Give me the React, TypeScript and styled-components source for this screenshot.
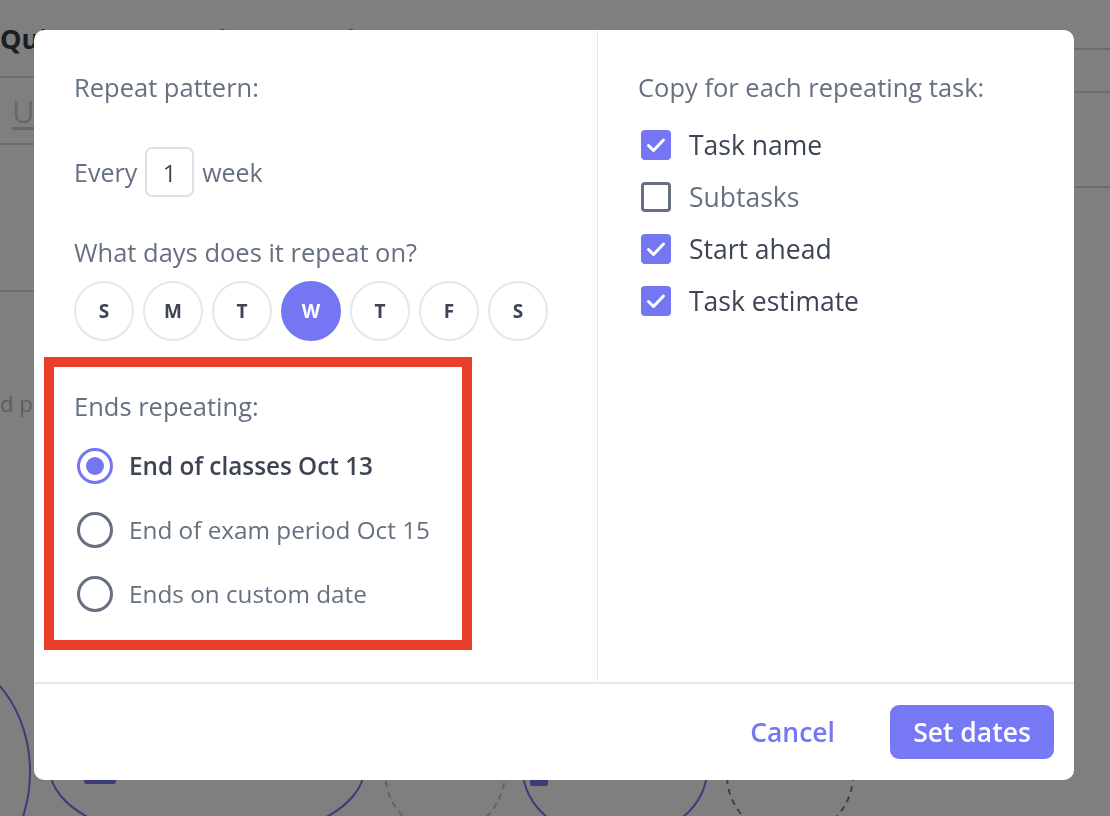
import React from "react";
import styled, { createGlobalStyle, css } from "styled-components";

const FONT = `"Open Sans", "Noto Sans", sans-serif`;

const GlobalStyle = createGlobalStyle`
  html, body { margin: 0; padding: 0; }
  body { font-family: ${FONT}; background: #fff; }
  * { box-sizing: border-box; }
`;

/* ---------- underlying page ---------- */
const Backdrop = styled.div`
  width: 1110px;
  height: 816px;
  display: flex;
  flex-direction: column;
  overflow: hidden;
  background: #fff;
`;

const BgTop = styled.div`
  display: flex;
  flex: 1;
`;

const BgLeft = styled.div`
  width: 600px;
  display: flex;
  flex-direction: column;
`;

const BgRight = styled.div`
  flex: 1;
  display: flex;
  flex-direction: column;
`;

const BgBlock = styled.div<{ $h: number; $line?: boolean }>`
  height: ${(p) => p.$h}px;
  flex-shrink: 0;
  border-bottom: ${(p) => (p.$line ? "2px solid #d9d9d9" : "none")};
  display: flex;
  align-items: center;
  gap: 140px;
  white-space: nowrap;
`;

const BgTitle = styled.span<{ $accent?: boolean }>`
  font-size: 27px;
  font-weight: 700;
  color: ${(p) => (p.$accent ? "#7476f2" : "#363c4a")};
`;

const BgName = styled.span`
  font-size: 31px;
  color: #cfcfcf;
  padding-left: 12px;
  text-decoration: underline;
  text-underline-offset: 4px;
`;

const BgText = styled.span`
  font-size: 22px;
  color: #b7bcc8;
  margin-top: -4px;
`;

const BgNodes = styled.svg`
  display: block;
  flex-shrink: 0;
`;

/* ---------- modal ---------- */
const Overlay = styled.div`
  position: fixed;
  inset: 0;
  background: rgba(0, 0, 0, 0.5);
  display: flex;
  align-items: flex-start;
  padding: 30px 0 0 34px;
`;

const Modal = styled.div`
  width: 1040px;
  height: 750px;
  background: #fff;
  border-radius: 10px;
  display: flex;
  flex-direction: column;
  overflow: hidden;
`;

const Body = styled.div`
  display: grid;
  grid-template-columns: 563px 1fr;
  height: 654px;
  border-bottom: 2px solid #e3e8ef;
`;

const Column = styled.div<{ $divider?: boolean }>`
  display: flex;
  flex-direction: column;
  padding: 45px 0 0 40px;
  ${(p) =>
    p.$divider &&
    css`
      border-left: 1px solid #e3e8ef;
    `}
`;

const Label = styled.div<{ $mt?: number }>`
  font-size: 25.5px;
  line-height: 24px;
  font-weight: 500;
  color: #667080;
  white-space: nowrap;
  margin-top: ${(p) => p.$mt ?? 0}px;
`;

const EveryRow = styled.div`
  display: flex;
  align-items: center;
  gap: 8px;
  margin-top: 48px;
  font-size: 25px;
  font-weight: 500;
  color: #667080;
`;

const NumberBox = styled.div`
  width: 49px;
  height: 50px;
  border: 2px solid #dde2ea;
  border-radius: 7px;
  display: flex;
  align-items: center;
  justify-content: center;
  font-size: 24px;
  color: #3d4454;
`;

const Days = styled.div`
  display: flex;
  gap: 9px;
  margin-top: 17px;
`;

const Day = styled.div<{ $active?: boolean }>`
  width: 60px;
  height: 60px;
  border-radius: 50%;
  display: flex;
  align-items: center;
  justify-content: center;
  font-size: 19px;
  font-weight: 700;
  border: 2px solid ${(p) => (p.$active ? "#7476f2" : "#e3e7ee")};
  background: ${(p) => (p.$active ? "#7476f2" : "#fff")};
  color: ${(p) => (p.$active ? "#fff" : "#3d4454")};
`;

const Highlight = styled.section`
  width: 428px;
  margin: 16px 0 0 -30px;
  border: 10px solid #e8402a;
  padding: 27px 20px 28px 20px;
  display: flex;
  flex-direction: column;
`;

const RadioList = styled.div`
  display: flex;
  flex-direction: column;
  gap: 28px;
  margin-top: 30px;
`;

const RadioRow = styled.label<{ $checked?: boolean }>`
  display: flex;
  align-items: center;
  gap: 16px;
  height: 36px;
  line-height: 1;
  white-space: nowrap;
  font-size: 24.3px;
  font-weight: ${(p) => (p.$checked ? 600 : 500)};
  color: ${(p) => (p.$checked ? "#3d4454" : "#667080")};
`;

const RadioCircle = styled.span<{ $checked?: boolean }>`
  width: 36px;
  height: 36px;
  margin-left: 3px;
  border-radius: 50%;
  border: 3px solid ${(p) => (p.$checked ? "#7476f2" : "#667080")};
  display: flex;
  align-items: center;
  justify-content: center;
  flex-shrink: 0;
  &::after {
    content: "";
    width: 18px;
    height: 18px;
    border-radius: 50%;
    background: ${(p) => (p.$checked ? "#7476f2" : "transparent")};
  }
`;

const CheckList = styled.div`
  display: flex;
  flex-direction: column;
  gap: 22px;
  margin-top: 31px;
`;

const CheckRow = styled.label<{ $checked?: boolean }>`
  display: flex;
  align-items: center;
  gap: 18px;
  height: 30px;
  line-height: 1;
  white-space: nowrap;
  font-size: 26.5px;
  font-weight: 500;
  color: ${(p) => (p.$checked ? "#3d4454" : "#667080")};
`;

const CheckBox = styled.span<{ $checked?: boolean }>`
  width: 30px;
  height: 30px;
  margin-left: 3px;
  border-radius: 4px;
  flex-shrink: 0;
  display: flex;
  align-items: center;
  justify-content: center;
  background: ${(p) => (p.$checked ? "#7476f2" : "#fff")};
  border: ${(p) => (p.$checked ? "none" : "3px solid #667080")};
`;

const Footer = styled.div`
  flex: 1;
  display: flex;
  align-items: center;
  justify-content: flex-end;
  gap: 55px;
  padding-right: 20px;
`;

const TextButton = styled.button`
  border: none;
  background: none;
  padding: 0;
  font-family: ${FONT};
  font-size: 26.5px;
  font-weight: 600;
  color: #7476f2;
  cursor: pointer;
`;

const PrimaryButton = styled.button`
  width: 164px;
  height: 54px;
  border: none;
  border-radius: 9px;
  background: #7678f5;
  color: #fff;
  font-family: ${FONT};
  font-size: 26.5px;
  font-weight: 600;
  cursor: pointer;
`;

const Check = () => (
  <svg width="24" height="24" viewBox="0 0 24 24" fill="none">
    <path
      d="M4.5 12.5l5 5 10-10.5"
      stroke="#fff"
      strokeWidth="3"
      strokeLinecap="round"
      strokeLinejoin="round"
    />
  </svg>
);

const days = [
  { l: "S" },
  { l: "M" },
  { l: "T" },
  { l: "W", active: true },
  { l: "T" },
  { l: "F" },
  { l: "S" },
];

const ends = [
  { t: "End of classes Oct 13", c: true },
  { t: "End of exam period Oct 15" },
  { t: "Ends on custom date" },
];

const copies = [
  { t: "Task name", c: true },
  { t: "Subtasks" },
  { t: "Start ahead", c: true },
  { t: "Task estimate", c: true },
];

export default function App() {
  return (
    <>
      <GlobalStyle />
      <Backdrop>
        <BgTop>
          <BgLeft>
            <BgBlock $h={78} $line>
              <BgTitle>Qui</BgTitle>
              <BgTitle $accent>Select template</BgTitle>
            </BgBlock>
            <BgBlock $h={67} $line>
              <BgName>U</BgName>
            </BgBlock>
            <BgBlock $h={147} $line />
            <BgBlock $h={225}>
              <BgText>d p</BgText>
            </BgBlock>
          </BgLeft>
          <BgRight>
            <BgBlock $h={50} $line />
            <BgBlock $h={43} $line />
            <BgBlock $h={95} $line />
          </BgRight>
        </BgTop>
        <BgNodes width="1110" height="136" viewBox="0 0 1110 136">
          <ellipse cx="-60" cy="92" rx="90" ry="115" fill="none" stroke="#7878ee" strokeWidth="2" />
          <ellipse cx="207" cy="89" rx="157" ry="74" fill="none" stroke="#7878ee" strokeWidth="2" />
          <ellipse cx="445" cy="92" rx="60" ry="62" fill="none" stroke="#c4c4c4" strokeWidth="2" strokeDasharray="6 5" />
          <ellipse cx="615" cy="90" rx="92" ry="70" fill="none" stroke="#7878ee" strokeWidth="2" />
          <ellipse cx="790" cy="95" rx="63" ry="62" fill="none" stroke="#808080" strokeWidth="2" strokeDasharray="6 5" />
          <rect x="84" y="88" width="32" height="16" rx="3" fill="#7878ee" />
          <rect x="530" y="88" width="18" height="18" rx="2" fill="#7878ee" />
        </BgNodes>
      </Backdrop>

      <Overlay>
        <Modal role="dialog">
          <Body>
            <Column>
              <Label>Repeat pattern:</Label>
              <EveryRow>
                <span>Every</span>
                <NumberBox>1</NumberBox>
                <span>week</span>
              </EveryRow>
              <Label $mt={43}>What days does it repeat on?</Label>
              <Days>
                {days.map((d, i) => (
                  <Day key={i} $active={d.active}>
                    {d.l}
                  </Day>
                ))}
              </Days>
              <Highlight>
                <Label>Ends repeating:</Label>
                <RadioList>
                  {ends.map((e) => (
                    <RadioRow key={e.t} $checked={e.c}>
                      <RadioCircle $checked={e.c} />
                      {e.t}
                    </RadioRow>
                  ))}
                </RadioList>
              </Highlight>
            </Column>
            <Column $divider>
              <Label>Copy for each repeating task:</Label>
              <CheckList>
                {copies.map((c) => (
                  <CheckRow key={c.t} $checked={c.c}>
                    <CheckBox $checked={c.c}>{c.c && <Check />}</CheckBox>
                    {c.t}
                  </CheckRow>
                ))}
              </CheckList>
            </Column>
          </Body>
          <Footer>
            <TextButton>Cancel</TextButton>
            <PrimaryButton>Set dates</PrimaryButton>
          </Footer>
        </Modal>
      </Overlay>
    </>
  );
}
